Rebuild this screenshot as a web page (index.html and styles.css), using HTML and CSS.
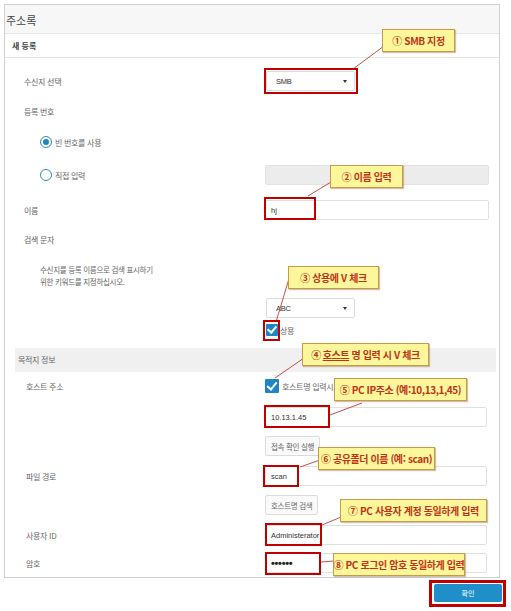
FILE: index.html
```html
<!DOCTYPE html>
<html lang="ko">
<head>
    <meta charset="UTF-8">
    <meta name="viewport" content="width=device-width, initial-scale=1">
    <title>주소록 - 새 등록</title>
    <link rel="stylesheet" href="styles.css">
</head>
<body>

<div class="panel">
    <div class="panel-title">주소록</div>
    <div class="sub-title">새 등록</div>

    <div class="row mt-13">
        <div class="label">수신지 선택</div>
        <div class="field"><div class="select">SMB<span class="caret"></span></div></div>
    </div>
    <div class="row">
        <div class="label">등록 번호</div>
    </div>
    <div class="row mt-11">
        <div class="label indent"><span class="radio on"></span>빈 번호를 사용</div>
    </div>
    <div class="row mt-13">
        <div class="label indent"><span class="radio"></span>직접 입력</div>
        <div class="field"><div class="input disabled"></div></div>
    </div>
    <div class="row mt-15">
        <div class="label">이름</div>
        <div class="field"><div class="input">hj</div></div>
    </div>
    <div class="row mt-9">
        <div class="label">검색 문자</div>
    </div>
    <div class="row tall mt-14">
        <div class="label indent desc">수신지를 등록 이름으로 검색 표시하기<br>위한 키워드를 지정하십시오.</div>
        <div class="field bottom"><div class="select">ABC<span class="caret"></span></div></div>
    </div>
    <div class="row mt-2">
        <div class="label"></div>
        <div class="field"><span class="check small"></span>상용</div>
    </div>

    <div class="band">목적지 정보</div>

    <div class="row mt-4 sec2">
        <div class="label">호스트 주소</div>
        <div class="field"><span class="check"></span>호스트명 입력시,</div>
    </div>
    <div class="row mt-11 sec2">
        <div class="label"></div>
        <div class="field"><div class="input">10.13.1.45</div></div>
    </div>
    <div class="row mt-9 sec2">
        <div class="label"></div>
        <div class="field"><span class="btn">접속 확인 실행</span></div>
    </div>
    <div class="row sec2">
        <div class="label">파일 경로</div>
        <div class="field"><div class="input">scan</div></div>
    </div>
    <div class="row mt-9 sec2">
        <div class="label"></div>
        <div class="field"><span class="btn">호스트명 검색</span></div>
    </div>
    <div class="row sec2">
        <div class="label">사용자 ID</div>
        <div class="field"><div class="input">Administerator</div></div>
    </div>
    <div class="row mt-8 sec2">
        <div class="label">암호</div>
        <div class="field"><div class="input pw">••••••</div></div>
    </div>
</div>

<div class="actions">
    <span class="ok-btn">확인</span>
</div>

<!-- annotations drawn over the screen -->
<svg class="leaders" width="511" height="611" viewBox="0 0 511 611">
    <line x1="353" y1="69" x2="384" y2="46"/>
    <line x1="308" y1="196" x2="331" y2="182"/>
    <line x1="276" y1="322" x2="291" y2="272"/>
    <line x1="275" y1="378" x2="304" y2="358"/>
    <line x1="330" y1="415" x2="362" y2="403"/>
    <line x1="300" y1="467" x2="320" y2="460"/>
    <line x1="322" y1="525" x2="341" y2="517"/>
    <line x1="321" y1="562" x2="334" y2="561"/>
</svg>

<div class="mark" style="left:264px;top:68px;width:94px;height:26px"></div>
<div class="mark" style="left:264px;top:197px;width:52px;height:23px"></div>
<div class="mark" style="left:263px;top:320px;width:17px;height:21px"></div>
<div class="mark" style="left:264px;top:405px;width:66px;height:23px"></div>
<div class="mark" style="left:263px;top:465px;width:36px;height:22px"></div>
<div class="mark" style="left:265px;top:523px;width:57px;height:23px"></div>
<div class="mark" style="left:265px;top:552px;width:56px;height:23px"></div>
<div class="mark thick" style="left:429px;top:580px;width:77px;height:27px"></div>

<div class="callout" style="left:382px;top:29px;width:73px">① SMB 지정</div>
<div class="callout" style="left:330px;top:165px;width:73px">② 이름 입력</div>
<div class="callout" style="left:288px;top:266px;width:91px">③ 상용에 V 체크</div>
<div class="callout" style="left:302px;top:343px;width:127px">④&nbsp;<u>호스트</u>&nbsp;명 입력 시 V 체크</div>
<div class="callout" style="left:334px;top:378px;width:133px">⑤ PC IP주소 (예:10,13,1,45)</div>
<div class="callout" style="left:318px;top:447px;width:117px">⑥ 공유폴더 이름 (예: scan)</div>
<div class="callout" style="left:340px;top:499px;width:147px">⑦ PC 사용자 계정 동일하게 입력</div>
<div class="callout" style="left:333px;top:553px;width:132px">⑧ PC 로그인 암호 동일하게 입력</div>

</body>
</html>
```

FILE: styles.css
```css
body {
    font-family: "Noto Sans CJK KR", "Noto Sans", sans-serif;
    background: #fff;
    color: #666;
    margin: 0;
    padding: 4px;
    position: relative;
    width: 511px;
    height: 611px;
    box-sizing: border-box;
    overflow: hidden;
}
.panel {
    width: 496px;
    border: 1px solid #cfcfcf;
    box-sizing: border-box;
    padding-bottom: 4px;
}
.panel-title {
    height: 28px;
    line-height: 30px;
    padding-left: 1px;
    font-size: 11px;
    color: #444;
    background: #f7f7f7;
    border-bottom: 1px solid #e6e6e6;
}
.sub-title {
    height: 23px;
    line-height: 23px;
    padding-left: 7px;
    font-size: 8px;
    font-weight: bold;
    color: #444;
    border-bottom: 1px solid #e6e6e6;
}
.row {
    display: flex;
    align-items: center;
    height: 20px;
    margin-top: 10px;
}
.row.tall {
    height: 55px;
    align-items: stretch;
}
.mt-2 { margin-top: 2px; }
.mt-4 { margin-top: 4px; }
.mt-8 { margin-top: 8px; }
.mt-9 { margin-top: 9px; }
.mt-11 { margin-top: 11px; }
.mt-13 { margin-top: 13px; }
.mt-14 { margin-top: 14px; }
.mt-15 { margin-top: 15px; }
.label {
    width: 260px;
    flex: none;
    box-sizing: border-box;
    padding-left: 19px;
    font-size: 8px;
    letter-spacing: -0.3px;
    display: flex;
    align-items: center;
}
.sec2 .label {
    padding-left: 21px;
}
.label.indent {
    padding-left: 35px;
}
.label.desc {
    display: block;
    padding-top: 1px;
    font-size: 7.5px;
    line-height: 12px;
}
.field {
    flex: 1;
    display: flex;
    align-items: center;
    font-size: 8px;
    padding-right: 10px;
    letter-spacing: -0.3px;
}
.sec2 .field {
    padding-right: 12px;
}
.field.bottom {
    align-items: flex-end;
}
.select {
    width: 89px;
    height: 20px;
    margin-left: 1px;
    box-sizing: border-box;
    border: 1px solid #dcdcdc;
    border-radius: 2px;
    background: #fff;
    font-family: "Liberation Sans", Arial, sans-serif;
    font-size: 7.5px;
    color: #333;
    padding-left: 9px;
    display: flex;
    align-items: center;
    justify-content: space-between;
    padding-right: 7px;
}
.caret {
    border-left: 2.5px solid transparent;
    border-right: 2.5px solid transparent;
    border-top: 3px solid #333;
}
.input {
    width: 100%;
    height: 20px;
    box-sizing: border-box;
    border: 1px solid #e0e0e0;
    border-radius: 2px;
    background: #fff;
    font-family: "Liberation Sans", Arial, sans-serif;
    font-size: 7.5px;
    letter-spacing: 0;
    color: #333;
    padding-left: 5px;
    display: flex;
    align-items: center;
}
.input.disabled {
    background: #ececec;
    border-color: #e2e2e2;
}
.input.pw {
    font-size: 11px;
    font-weight: bold;
    letter-spacing: -0.3px;
    color: #222;
}
.radio {
    width: 12px;
    height: 12px;
    box-sizing: border-box;
    border: 1.5px solid #2a8db8;
    border-radius: 50%;
    margin-right: 3px;
    position: relative;
    flex: none;
}
.radio.on::after {
    content: "";
    position: absolute;
    left: 1.5px;
    top: 1.5px;
    width: 6px;
    height: 6px;
    border-radius: 50%;
    background: #1f87b8;
}
.check {
    width: 14px;
    height: 14px;
    margin-right: 3px;
    border-radius: 1px;
    background: #1d84c6;
    flex: none;
    position: relative;
}
.check.small {
    width: 12px;
    height: 12px;
    margin-left: 1px;
    margin-right: 2px;
}
.check::after {
    content: "";
    position: absolute;
    left: 4px;
    top: 1px;
    width: 4px;
    height: 8px;
    border-right: 2px solid #fff;
    border-bottom: 2px solid #fff;
    transform: rotate(40deg);
}
.check.small::after {
    left: 3px;
    top: 0;
    height: 7px;
}
.btn {
    height: 20px;
    box-sizing: border-box;
    padding: 0 5px;
    border: 1px solid #dcdcdc;
    border-radius: 2px;
    background: #fafafa;
    font-size: 7.5px;
    display: flex;
    align-items: center;
}
.band {
    margin: 8px 3px 0 10px;
    height: 24px;
    line-height: 24px;
    padding-left: 3px;
    background: #f0f0f0;
    font-size: 8px;
    letter-spacing: -0.3px;
}
.actions {
    display: flex;
    justify-content: flex-end;
    margin-top: 6px;
    padding-right: 5px;
}
.ok-btn {
    width: 68px;
    height: 18px;
    border-radius: 2px;
    background: #1f8fca;
    color: #fff;
    font-size: 7px;
    display: flex;
    align-items: center;
    justify-content: center;
}
.leaders {
    position: absolute;
    left: 0;
    top: 0;
}
.leaders line {
    stroke: #c4504c;
    stroke-width: 1;
}
.mark {
    position: absolute;
    box-sizing: border-box;
    border: 2px solid #c00000;
}
.mark.thick {
    border-width: 3px;
}
.callout {
    position: absolute;
    height: 23px;
    box-sizing: border-box;
    border: 1.5px solid #c89a48;
    background: #fdf79c;
    box-shadow: 1px 1px 1px rgba(120, 80, 20, 0.35);
    color: #bf3418;
    font-size: 10px;
    font-weight: bold;
    letter-spacing: -0.4px;
    white-space: nowrap;
    display: flex;
    align-items: center;
    justify-content: center;
}
```
